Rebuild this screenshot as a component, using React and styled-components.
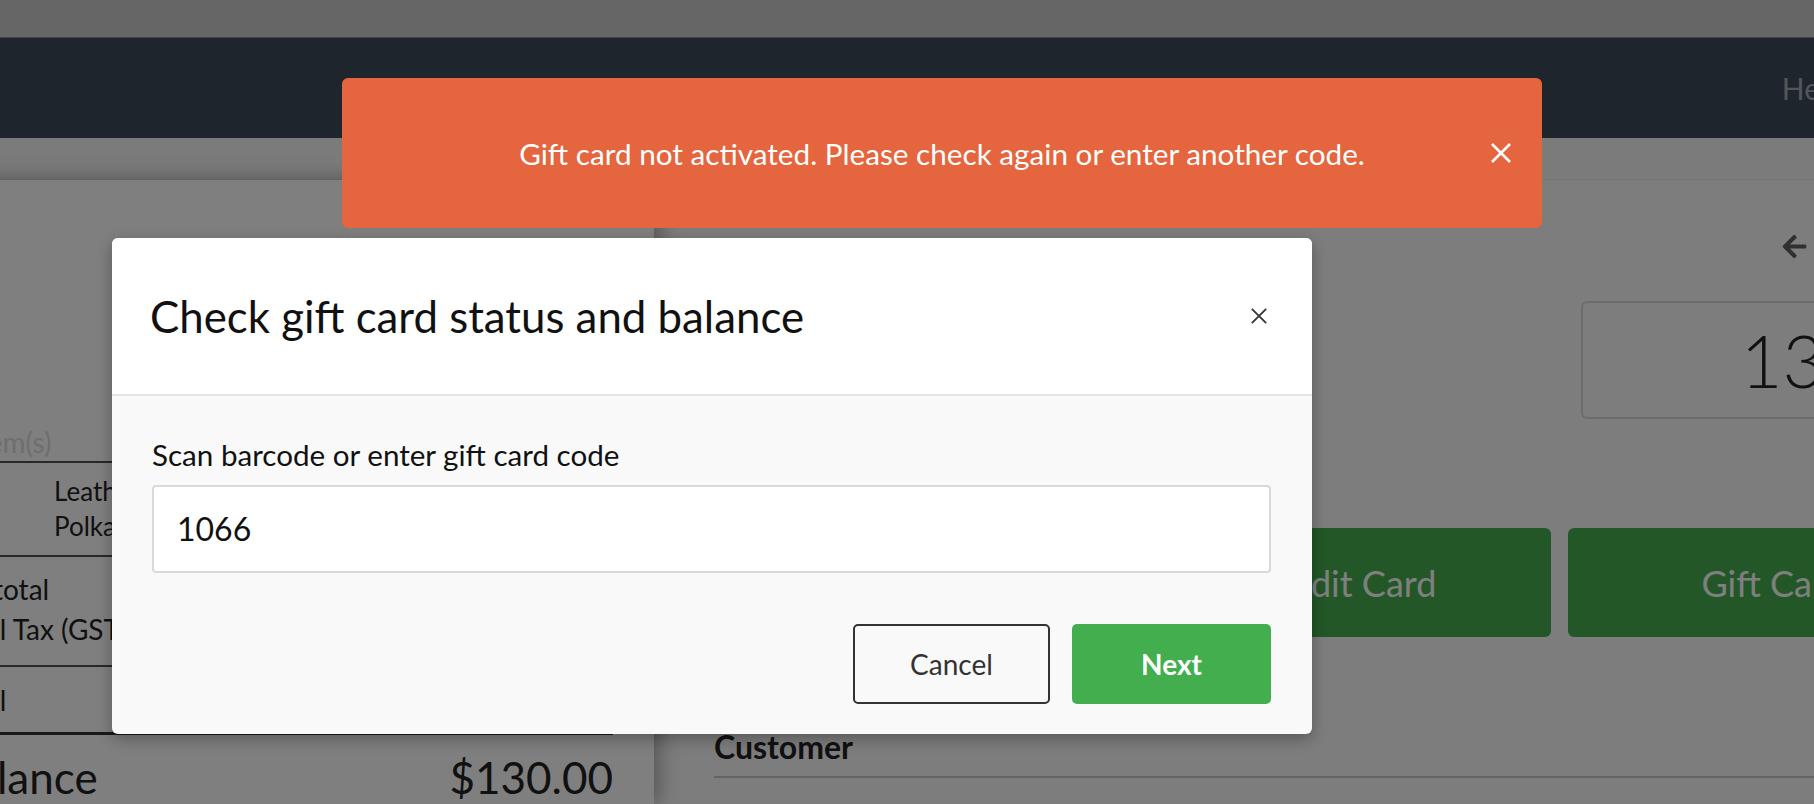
import React from "react";
import styled, { createGlobalStyle } from "styled-components";
import { FaArrowLeft } from "react-icons/fa";

const GlobalStyle = createGlobalStyle`
  html, body {
    margin: 0;
    padding: 0;
  }
  body {
    font-family: Lato, "Open Sans", "Liberation Sans", sans-serif;
    background: #ffffff;
    overflow: hidden;
  }
  * {
    box-sizing: border-box;
  }
`;

const Viewport = styled.div`
  position: relative;
  width: 1814px;
  height: 804px;
  overflow: hidden;
`;

// the register page is scrolled sideways a little, so the shell starts off-screen
const Shell = styled.div`
  margin-left: -60px;
  width: 2000px;
  height: 804px;
  display: flex;
  flex-direction: column;
`;

const TopStrip = styled.div`
  height: 38px;
  background: #cccccc;
  border-bottom: 1px solid #888888;
`;

const NavBar = styled.nav`
  height: 100px;
  background: #3e4a58;
  display: flex;
  align-items: center;
  justify-content: flex-end;
  padding-right: 96px;
`;

const NavLink = styled.span`
  font-size: 30px;
  color: #a3acb5;
`;

const SubBar = styled.div`
  height: 42px;
  background: #f6f6f6;
  border-bottom: 1px solid #ececec;
`;

const Main = styled.div`
  flex: 1;
  display: flex;
  min-height: 0;
`;

const LeftPanel = styled.section`
  width: 714px;
  flex: none;
  background: #ffffff;
  padding: 0 41px 0 7px;
  box-shadow: 4px 0 20px rgba(0, 0, 0, 0.35);
  position: relative;
  color: #222;
`;

const ItemsHead = styled.div`
  margin-top: 246px;
  padding-bottom: 1px;
  font-size: 28px;
  line-height: 1.2;
  color: #dcdcdc;
  border-bottom: 2px solid #505050;
`;

const ItemsBlock = styled.div`
  padding: 11px 0 11px;
  border-bottom: 2px solid #505050;
`;

const ItemRow = styled.div`
  display: grid;
  grid-template-columns: 107px 1fr auto;
  font-size: 26px;
  line-height: 35px;
`;

const SummaryBlock = styled.div`
  padding: ${(p) => p.$pad || "12px 0 16px"};
  border-bottom: ${(p) => (p.$thick ? "3px solid #333" : p.$last ? "none" : "2px solid #505050")};
`;

const SummaryRow = styled.div`
  display: flex;
  justify-content: space-between;
  font-size: ${(p) => p.$size || 28}px;
  line-height: ${(p) => p.$lh || 40}px;
`;

const RightArea = styled.section`
  flex: 1;
  min-width: 0;
  background: #fafafa;
  padding: 0 60px;
  display: flex;
  flex-direction: column;
`;

const BackRow = styled.div`
  margin-top: 48px;
  display: flex;
  justify-content: flex-end;
`;

const BackLink = styled.span`
  display: flex;
  align-items: center;
  gap: 7px;
  font-size: 30px;
  line-height: 36px;
  font-weight: 700;
  color: #606060;
`;

const AmountRow = styled.div`
  margin-top: 37px;
  display: flex;
  justify-content: space-between;
  align-items: center;
`;

const AmountLabel = styled.span`
  font-size: 30px;
  color: #333;
`;

const AmountBox = styled.div`
  width: 299px;
  height: 118px;
  border: 2px solid #d8d8d8;
  border-radius: 6px;
  display: flex;
  align-items: center;
  justify-content: flex-end;
  padding-right: 12px;
  font-size: 72px;
  font-weight: 300;
  color: #222;
`;

const PayButtons = styled.div`
  margin-top: 109px;
  display: grid;
  grid-template-columns: repeat(3, 410px);
  gap: 17px;
`;

const PayButton = styled.div`
  height: 109px;
  border-radius: 6px;
  background: #46ae4e;
  color: #ffffff;
  font-size: 36px;
  display: flex;
  align-items: center;
  justify-content: center;
`;

const CustomerHead = styled.div`
  margin-top: 91px;
  padding-bottom: 10px;
  border-bottom: 2px solid #c8c8c8;
  font-size: 32px;
  line-height: 38px;
  font-weight: 700;
  color: #222;
`;

const Backdrop = styled.div`
  position: absolute;
  inset: 0;
  z-index: 10;
  background: rgba(0, 0, 0, 0.5);
`;

const Toast = styled.div`
  position: absolute;
  z-index: 12;
  left: 342px;
  top: 78px;
  width: 1200px;
  height: 150px;
  border-radius: 6px;
  background: #e5653e;
  color: #ffffff;
  display: grid;
  grid-template-columns: 1fr auto 1fr;
  align-items: center;
`;

const ToastText = styled.p`
  margin: 0;
  grid-column: 2;
  font-size: 29.7px;
`;

const ToastClose = styled.span`
  grid-column: 3;
  justify-self: end;
  margin-right: 31px;
  display: flex;
`;

const Modal = styled.div`
  position: absolute;
  z-index: 11;
  left: 112px;
  top: 238px;
  width: 1200px;
  border-radius: 6px;
  overflow: hidden;
  background: #f9f9f9;
  box-shadow: 0 5px 15px rgba(0, 0, 0, 0.3);
`;

const ModalHeader = styled.div`
  height: 158px;
  background: #ffffff;
  border-bottom: 2px solid #e6e6e6;
  display: flex;
  align-items: center;
  justify-content: space-between;
  padding: 0 45px 0 38px;
`;

const ModalTitle = styled.h2`
  margin: 0;
  font-size: 43.8px;
  font-weight: 400;
  color: #111;
`;

const ModalBody = styled.div`
  padding: 41px 41px 30px 40px;
`;

const FieldLabel = styled.label`
  display: block;
  font-size: 29.6px;
  line-height: 1.2;
  color: #111;
  margin-bottom: 12px;
`;

const CodeInput = styled.input`
  display: block;
  width: 100%;
  height: 88px;
  border: 2px solid #d9d9d9;
  border-radius: 4px;
  background: #ffffff;
  padding: 0 23px;
  font-family: inherit;
  font-size: 32px;
  color: #111;
  outline: none;
`;

const Footer = styled.div`
  margin-top: 51px;
  display: flex;
  justify-content: flex-end;
  gap: 22px;
`;

const Button = styled.button`
  width: ${(p) => (p.$primary ? 199 : 197)}px;
  height: 80px;
  border-radius: 5px;
  font-family: inherit;
  font-size: 28px;
  font-weight: ${(p) => (p.$primary ? 700 : 400)};
  color: ${(p) => (p.$primary ? "#ffffff" : "#333")};
  background: ${(p) => (p.$primary ? "#42ae4e" : "transparent")};
  border: ${(p) => (p.$primary ? "none" : "2px solid #333")};
`;

function Cross({ size, color, width }) {
  return (
    <svg width={size} height={size} viewBox="0 0 20 20">
      <path d="M1 1 L19 19 M19 1 L1 19" stroke={color} strokeWidth={width} strokeLinecap="butt" />
    </svg>
  );
}

export default function App() {
  return (
    <Viewport>
      <GlobalStyle />
      <Shell>
        <TopStrip />
        <NavBar>
          <NavLink>Help</NavLink>
        </NavBar>
        <SubBar />
        <Main>
          <LeftPanel>
            <ItemsHead>2 Item(s)</ItemsHead>
            <ItemsBlock>
              <ItemRow>
                <span>1</span>
                <span>Leather Wallet</span>
                <span>$60.00</span>
              </ItemRow>
              <ItemRow>
                <span>1</span>
                <span>Polka Dot Scarf</span>
                <span>$63.81</span>
              </ItemRow>
            </ItemsBlock>
            <SummaryBlock>
              <SummaryRow>
                <span>Subtotal</span>
                <span>$123.81</span>
              </SummaryRow>
              <SummaryRow>
                <span>Total Tax (GST)</span>
                <span>$6.19</span>
              </SummaryRow>
            </SummaryBlock>
            <SummaryBlock $pad="13px 0 12px" $thick>
              <SummaryRow>
                <span>Total</span>
                <span>$130.00</span>
              </SummaryRow>
            </SummaryBlock>
            <SummaryBlock $pad="16px 0 0" $last>
              <SummaryRow $size={44} $lh={53}>
                <span>Balance</span>
                <span>$130.00</span>
              </SummaryRow>
            </SummaryBlock>
          </LeftPanel>
          <RightArea>
            <BackRow>
              <BackLink>
                <FaArrowLeft size={27} />
                Back
              </BackLink>
            </BackRow>
            <AmountRow>
              <AmountLabel>Amount tendered</AmountLabel>
              <AmountBox>130</AmountBox>
            </AmountRow>
            <PayButtons>
              <PayButton>Cash</PayButton>
              <PayButton>Credit Card</PayButton>
              <PayButton>Gift Card</PayButton>
            </PayButtons>
            <CustomerHead>Customer</CustomerHead>
          </RightArea>
        </Main>
      </Shell>

      <Backdrop />

      <Modal>
        <ModalHeader>
          <ModalTitle>Check gift card status and balance</ModalTitle>
          <Cross size={16} color="#333" width={2.2} />
        </ModalHeader>
        <ModalBody>
          <FieldLabel>Scan barcode or enter gift card code</FieldLabel>
          <CodeInput defaultValue="1066" />
          <Footer>
            <Button>Cancel</Button>
            <Button $primary>Next</Button>
          </Footer>
        </ModalBody>
      </Modal>

      <Toast>
        <ToastText>Gift card not activated. Please check again or enter another code.</ToastText>
        <ToastClose>
          <Cross size={20} color="#ffffff" width={2.6} />
        </ToastClose>
      </Toast>
    </Viewport>
  );
}
